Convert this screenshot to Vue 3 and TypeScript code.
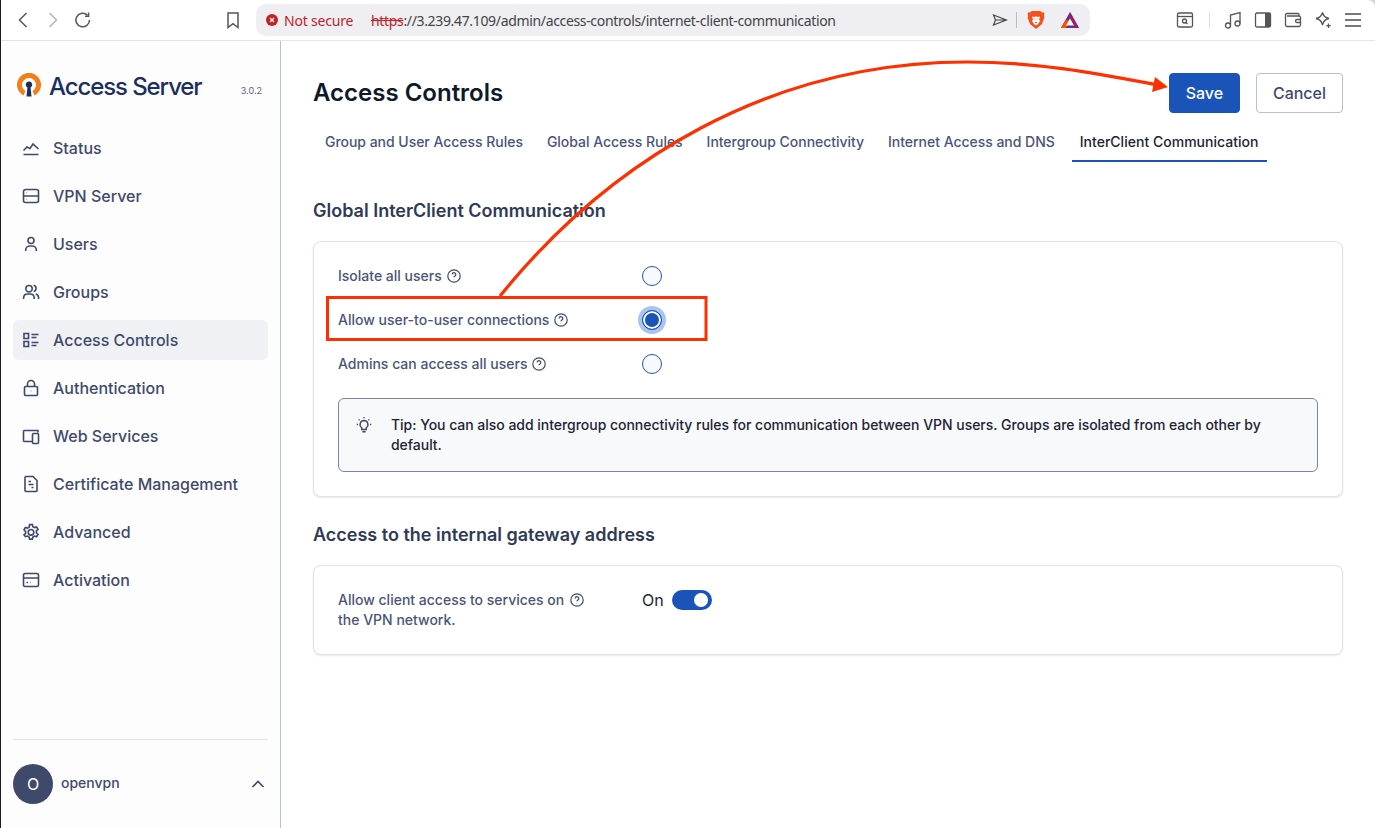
<script setup lang="ts">
interface NavItem { label: string; d: string; active?: boolean }
const nav: NavItem[] = [
  { label: 'Status', d: 'M2.500 16.500h15M2.500 12.500L6 9l3 1.500L12 6l5.500 5' },
  { label: 'VPN Server', d: 'M4.500 3.500h11a2 2 0 0 1 2 2v9a2 2 0 0 1-2 2h-11a2 2 0 0 1-2-2v-9a2 2 0 0 1 2-2zM2.500 10h15M5.200 6.800h.3M5.200 13.200h.3' },
  { label: 'Users', d: 'M10 3.500a3 3 0 1 1 0 6 3 3 0 0 1 0-6zM4.700 17v-1.200a4.300 3.800 0 0 1 4.300-3.800h2a4.300 3.800 0 0 1 4.300 3.800V17' },
  { label: 'Groups', d: 'M8 3.500a3.200 3.200 0 1 1 0 6.400 3.200 3.200 0 0 1 0-6.400zM2.600 17v-1.300a4 4 0 0 1 4-3.700h2.600a4 4 0 0 1 4 3.700V17M12.600 3.300a3.200 3.200 0 0 1 0 6.200M14.800 12.100a4 4 0 0 1 2.800 3.600V17' },
  { label: 'Access Controls', d: 'M3 3.500h4.500v5H3zM3 11.500h4.500v5H3zM10.500 4.500h7M10.500 7.500h5M10.500 12.500h7M10.500 15.500h5', active: true },
  { label: 'Authentication', d: 'M4.500 8.500h11a1 1 0 0 1 1 1v7a1 1 0 0 1-1 1h-11a1 1 0 0 1-1-1v-7a1 1 0 0 1 1-1zM6.500 8.500V6a3.500 3.500 0 0 1 7 0v2.500M9.800 13h.4' },
  { label: 'Web Services', d: 'M11 15.500H3.500a1 1 0 0 1-1-1v-9a1 1 0 0 1 1-1H17v2M12.500 7.500h4a1 1 0 0 1 1 1v8a1 1 0 0 1-1 1h-4a1 1 0 0 1-1-1v-8a1 1 0 0 1 1-1z' },
  { label: 'Certificate Management', d: 'M5 2.500h7l4 4v10a1 1 0 0 1-1 1H5a1 1 0 0 1-1-1v-13a1 1 0 0 1 1-1zM7.500 7.500h2.500M7.500 10.500h5M10.500 13.500h2' },
  { label: 'Advanced', d: 'M8.600 2.600h2.800l.5 2.100 1.600.9 2.100-.6 1.400 2.400-1.600 1.500v1.900l1.600 1.500-1.400 2.400-2.100-.6-1.600.9-.5 2.100H8.600l-.5-2.100-1.600-.9-2.100.6L3 12.800l1.600-1.500V9.400L3 7.900l1.400-2.400 2.100.6 1.600-.9zM10 7.500a2.800 2.800 0 1 1 0 5.600 2.800 2.800 0 0 1 0-5.600z' },
  { label: 'Activation', d: 'M4 3.500h12a1.500 1.500 0 0 1 1.500 1.500v10a1.500 1.500 0 0 1-1.500 1.500H4A1.500 1.500 0 0 1 2.500 15V5A1.500 1.500 0 0 1 4 3.500zM2.500 8h15M5.500 12.500h1.500M9 12.500h.5' },
]
const tabs: string[] = ['Group and User Access Rules', 'Global Access Rules', 'Intergroup Connectivity', 'Internet Access and DNS', 'InterClient Communication']
const radios = [
  { label: 'Isolate all users', checked: false },
  { label: 'Allow user-to-user connections', checked: true },
  { label: 'Admins can access all users', checked: false },
]
</script>

<template>
  <div class="page">
    <header class="chrome">
      <button class="cbtn"><svg width="20" height="20" viewBox="0 0 20 20"><path d="M13.500 3L6.500 10l7 7" class="cs" /></svg></button>
      <button class="cbtn"><svg width="20" height="20" viewBox="0 0 20 20"><path d="M6.500 3l7 7-7 7" class="cs faint" /></svg></button>
      <button class="cbtn"><svg width="20" height="20" viewBox="0 0 20 20"><path d="M16.500 10a6.800 6.800 0 1 1-2-4.800" class="cs" /><path d="M15.600 2.600v3.600H12" class="cs" /></svg></button>
      <button class="cbtn bookmark"><svg width="20" height="20" viewBox="0 0 20 20"><path d="M5 3h10v14.500l-5-3.800-5 3.800z" class="cs" /></svg></button>
      <div class="urlbar">
        <svg class="warn" width="12" height="12" viewBox="0 0 12 12"><circle cx="6" cy="6" r="6" fill="#c5221f" /><path d="M4 4l4 4M8 4l-4 4" stroke="#fff" stroke-width="1.200" /></svg>
        <span class="notsecure">Not secure</span>
        <span class="url"><span class="https">https</span>://3.239.47.109/admin/access-controls/internet-client-communication</span>
        <svg class="send" width="16" height="14" viewBox="0 0 16 14"><path d="M1.500 2l13 5-13 5 2-5zM3.500 7h11" fill="none" stroke="#444" stroke-width="1.200" /></svg>
        <span class="barsep"></span>
        <svg class="brave" width="18" height="20" viewBox="0 0 18 20"><path d="M4.500 1h9l1.200 1.400 1.800-.2 1 1.300-.6 2 .5 2L15 14l-6 5-6-5-2.400-6.500.5-2-.6-2 1-1.300 1.800.2z" fill="#f4511e" /><path d="M5 6.500l2.500.5L9 6.300l1.500.7 2.500-.5-1 3 1 1.500L11 14l-2 1.500L7 14l-2-3 1-1.500z" fill="#fff" /><path d="M7.500 9h.8M9.700 9h.8M8 12.500h2" stroke="#f4511e" stroke-width="1" /></svg>
        <svg class="bat" width="20" height="18" viewBox="0 0 20 18"><path d="M10 1L19 17H1z" fill="#662d91" /><path d="M10 1L19 17h-5L10 9.500z" fill="#9e1f63" /><path d="M1 17l4.500-8L10 9.500 6 17z" fill="#ff5000" /><path d="M10 7.500l4 7H6z" fill="#fff" /></svg>
      </div>
      <button class="cbtn shot"><svg width="20" height="20" viewBox="0 0 20 20"><rect x="2.500" y="3" width="15" height="14" rx="1.500" class="cs thin" /><path d="M2.500 6.500h15" class="cs thin" /><circle cx="9.500" cy="11" r="2" class="cs thin" /><path d="M11 12.500l1.500 1.500" class="cs thin" /></svg></button>
      <span class="toolsep"></span>
      <button class="cbtn"><svg width="20" height="20" viewBox="0 0 20 20"><circle cx="5" cy="15.500" r="2.500" class="cs thin" /><circle cx="14.500" cy="13.500" r="2.500" class="cs thin" /><path d="M7.500 15.500V5L17 2.500v11" class="cs thin" /></svg></button>
      <button class="cbtn"><svg width="20" height="20" viewBox="0 0 20 20"><rect x="2.500" y="3" width="15" height="14" rx="1.500" class="cs thin" /><path d="M12 3h4.500a1 1 0 0 1 1 1v12a1 1 0 0 1-1 1H12z" fill="#555" /></svg></button>
      <button class="cbtn"><svg width="20" height="20" viewBox="0 0 20 20"><path d="M16 6V4.500a1 1 0 0 0-1-1H4a1.500 1.500 0 0 0-1.500 1.500v10A1.500 1.500 0 0 0 4 16.500h12a1.500 1.500 0 0 0 1.500-1.500V7.500A1.500 1.500 0 0 0 16 6H4M17.500 9.500H14a1.500 1.500 0 0 0 0 3h3.500" class="cs thin" /></svg></button>
      <button class="cbtn"><svg width="20" height="20" viewBox="0 0 20 20"><path d="M9.500 2.500c.8 3.500 2.500 5.300 6.500 6-4 .8-5.700 2.500-6.500 6.500-.8-4-2.500-5.700-6.500-6.500 4-.7 5.700-2.500 6.500-6zM15.500 13.500v4.500M13.300 15.700h4.400" class="cs thin" /></svg></button>
      <button class="cbtn"><svg width="20" height="20" viewBox="0 0 20 20"><path d="M2 4h16M2 10h16M2 16h16" class="cs menu" /></svg></button>
    </header>

    <div class="shell">
      <aside class="sidebar">
        <div class="brand">
          <svg class="logo" width="24" height="24" viewBox="0 0 24 24">
            <path d="M6.500 22.500A12 12 0 1 1 17.500 22.500L15.600 18A7 7 0 1 0 8.400 18z" fill="#f07f1a" />
            <path d="M12 8.600a3.200 3.200 0 0 1 1.600 6L14.500 23.500H9.500l.9-8.900A3.200 3.200 0 0 1 12 8.600z" fill="#1b2f5e" />
          </svg>
          <span class="brandname">Access Server</span>
          <span class="version">3.0.2</span>
        </div>
        <nav class="nav">
          <a v-for="item in nav" :key="item.label" class="navitem" :class="{ active: item.active }">
            <svg width="20" height="20" viewBox="0 0 20 20"><path :d="item.d" class="ns" /></svg>
            <span>{{ item.label }}</span>
          </a>
        </nav>
        <div class="userfoot">
          <span class="avatar">O</span>
          <span class="username">openvpn</span>
          <svg class="chev" width="14" height="14" viewBox="0 0 14 14"><path d="M1.500 10L7 4.500 12.500 10" fill="none" stroke="#3f4a6b" stroke-width="1.600" /></svg>
        </div>
      </aside>

      <main class="main">
        <div class="titlebar">
          <h1>Access Controls</h1>
          <div class="actions">
            <button class="btn primary">Save</button>
            <button class="btn">Cancel</button>
          </div>
        </div>
        <div class="tabs">
          <span v-for="(t, i) in tabs" :key="t" class="tab" :class="{ current: i === 4 }">{{ t }}</span>
        </div>

        <h2 class="h-first">Global InterClient Communication</h2>
        <section class="card first">
          <div v-for="r in radios" :key="r.label" class="row">
            <div class="lab">
              <span>{{ r.label }}</span>
              <svg class="help" width="14" height="14" viewBox="0 0 14 14"><circle cx="7" cy="7" r="6.200" /><path d="M5.200 5.400a1.800 1.800 0 1 1 2.700 1.600c-.6.400-.9.700-.9 1.300M7 10.200v.4" /></svg>
            </div>
            <span class="radio" :class="{ checked: r.checked }"></span>
          </div>
          <div class="tip">
            <svg class="bulb" width="18" height="18" viewBox="0 0 18 18"><path d="M9 4.500a4 4 0 0 1 2.300 7.200v1.800H6.700v-1.800A4 4 0 0 1 9 4.500zM7.300 15.800h3.400M1.800 8.500h1.200M15 8.500h1.200M3.800 3.500l.8.800M14.200 3.500l-.8.800M9 1v1.200" /></svg>
            <p>Tip: You can also add intergroup connectivity rules for communication between VPN users. Groups are isolated from each other by default.</p>
          </div>
        </section>

        <h2 class="h-second">Access to the internal gateway address</h2>
        <section class="card second">
          <div class="wide">Allow client access to services on<svg class="help inl" width="14" height="14" viewBox="0 0 14 14"><circle cx="7" cy="7" r="6.200" /><path d="M5.200 5.400a1.800 1.800 0 1 1 2.700 1.600c-.6.400-.9.700-.9 1.300M7 10.200v.4" /></svg> the VPN network.</div>
          <span class="state">On</span>
          <span class="toggle"><span class="knob"></span></span>
        </section>
      </main>
    </div>

    <svg class="annot" width="1375" height="828" viewBox="0 0 1375 828">
      <rect x="327.500" y="297.500" width="378.500" height="42" fill="none" stroke="#ff3000" stroke-width="3" />
      <path d="M500 296C610 160 770 62 967 62C1040 62 1100 74 1158 85" fill="none" stroke="#ff3000" stroke-width="3.200" />
      <path d="M1168 87L1155 77L1152 92z" fill="#ff3000" />
    </svg>
  </div>
</template>

<style>
html, body { margin: 0; padding: 0; background: #fff; }
</style>

<style scoped>
.page { position: relative; width: 1375px; height: 828px; overflow: hidden; font-family: Inter, "Liberation Sans", sans-serif; color: #3f4a6b; background: #d8d8d8; box-sizing: border-box; border-left: 1px solid #1c1a1e; }
.chrome { height: 40px; border-bottom: 1px solid #e4e4e6; border-top-right-radius: 8px; display: flex; align-items: center; padding-left: 7px; box-sizing: content-box; background: #fff; }
.cbtn { width: 30px; height: 30px; padding: 0; border: 0; background: none; display: flex; align-items: center; justify-content: center; flex: none; }
.cs { fill: none; stroke: #555; stroke-width: 1.500; }
.cs.thin { stroke-width: 1.300; }
.cs.faint { stroke: #b5b5b5; }
.cs.menu { stroke: #777; stroke-width: 1.800; }
.bookmark { margin-left: 120px; }
.urlbar { margin-left: 8px; width: 834px; height: 32px; border-radius: 10px; background: #eeeef3; display: flex; align-items: center; padding-left: 10px; box-sizing: border-box; font-family: "Noto Sans", sans-serif; flex: none; }
.warn { flex: none; }
.notsecure { margin-left: 6px; width: 87px; color: #c5221f; font-size: 14px; letter-spacing: -0.2px; white-space: nowrap; }
.url { font-size: 14px; color: #444; width: 589px; white-space: nowrap; letter-spacing: -0.34px; }
.https { color: #c5221f; text-decoration: line-through; }
.send { margin-left: 32px; flex: none; }
.barsep { width: 1px; height: 16px; background: #bbb; margin-left: 8px; flex: none; }
.brave { margin-left: 10px; flex: none; }
.bat { margin-left: 15px; flex: none; }
.shot { margin-left: 80px; }
.toolsep { width: 1px; height: 16px; background: #ddd; margin: 0 8px 0 9px; flex: none; }

.shell { display: flex; height: 787px; background: #fff; }
.sidebar { width: 280px; flex: none; box-sizing: border-box; border-right: 1px solid #b8c0d8; background: #fdfdfd; padding: 0 12px; display: flex; flex-direction: column; }
.brand { height: 24px; margin-top: 32px; padding-left: 4px; display: flex; align-items: center; }
.logo { flex: none; }
.brandname { margin-left: 8px; margin-top: 3px; font-size: 24px; font-weight: 500; color: #1b2f5e; letter-spacing: -1.100px; white-space: nowrap; }
.version { margin-left: auto; margin-right: 6px; font-size: 9px; color: #5a6480; margin-top: 11px; }
.nav { margin-top: 31px; display: flex; flex-direction: column; gap: 8px; }
.navitem { height: 40px; display: flex; align-items: center; gap: 12px; padding-left: 8px; border-radius: 6px; font-size: 16px; font-weight: 500; color: #3f4a6b; }
.navitem.active { background: #f0f1f5; }
.ns { fill: none; stroke: #3f4a6b; stroke-width: 1.600; }
.userfoot { margin-top: auto; border-top: 1px solid #dfe1ec; height: 89px; box-sizing: border-box; padding-top: 24px; display: flex; align-items: flex-start; }
.avatar { width: 40px; height: 40px; border-radius: 50%; background: #3f4a6b; color: #fff; font-size: 16px; display: flex; align-items: center; justify-content: center; flex: none; }
.username { margin-left: 8px; margin-top: 10px; font-size: 14px; font-weight: 500; line-height: 18px; }
.chev { margin-left: auto; margin-right: 3px; margin-top: 13px; }

.main { flex: 1; min-width: 0; padding: 32px 32px 0; box-sizing: border-box; }
.titlebar { display: flex; align-items: center; justify-content: space-between; height: 40px; }
h1 { margin: -2px 0 0; font-size: 24px; font-weight: 600; color: #10182b; }
.actions { display: flex; gap: 16px; }
.btn { height: 40px; padding: 0 16px; border-radius: 4px; background: #fff; border: 1px solid #b8c0d8; color: #3f4a6b; font: 500 16px Inter, sans-serif; }
.btn.primary { width: 71px; padding: 0; background: #1a54b8; border-color: #1a54b8; color: #fff; }
.tabs { display: flex; gap: 8px; padding-left: 4px; margin-top: 8px; height: 40px; }
.tab { padding: 0 8px; height: 39px; line-height: 42px; font-size: 14px; font-weight: 500; letter-spacing: -0.03px; white-space: nowrap; color: #4a5578; }
.tab.current { margin-left: 1px; letter-spacing: 0.02px; color: #1d2433; border-bottom: 2px solid #1a54b8; }
h2 { margin: 0; font-size: 18px; line-height: 24px; font-weight: 600; color: #2f3a56; }
.h-first { margin-top: 38px; }
.h-second { margin-top: 26px; }
.card { margin-top: 18px; border: 1px solid #dfe1ec; border-radius: 8px; box-sizing: border-box; background: #fff; box-shadow: 0 1px 2px rgba(30, 40, 80, 0.1); padding: 0 24px; }
.card.first { height: 256px; padding-top: 12px; }
.card.second { height: 90px; display: flex; padding-top: 24px; align-items: flex-start; }
.row { height: 44px; display: flex; align-items: center; }
.lab { width: 304px; flex: none; font-size: 14px; font-weight: 500; color: #4a5578; line-height: 20px; display: flex; align-items: center; gap: 5px; }
.wide { width: 250px; margin-right: 54px; flex: none; font-size: 14px; font-weight: 500; color: #4a5578; line-height: 20px; }
.help { fill: none; stroke: #3f4a6b; stroke-width: 1.200; flex: none; }
.help.inl { margin-left: 6px; vertical-align: -2px; }
.radio { width: 20px; height: 20px; box-sizing: border-box; border: 1px solid #1a54b8; border-radius: 50%; background: #f8f9fb; flex: none; }
.radio.checked { background: #1a54b8; box-shadow: inset 0 0 0 2px #fff, 0 0 0 4px #a9c4ef; }
.tip { margin-top: 12px; height: 74px; box-sizing: border-box; border: 1px solid #7a86ad; border-radius: 6px; background: #f8f9fb; display: flex; padding: 16px 52px 0 16px; gap: 18px; }
.tip p { margin: 0; font-size: 14px; font-weight: 500; letter-spacing: -0.03px; line-height: 20px; color: #1d2433; }
.bulb { fill: none; stroke: #3f4a6b; stroke-width: 1.400; flex: none; margin-top: 1px; }
.state { font-size: 16px; line-height: 20px; color: #1d2433; width: 30px; }
.toggle { width: 40px; height: 20px; border-radius: 10px; background: #1a54b8; position: relative; flex: none; }
.knob { position: absolute; right: 4px; top: 3px; width: 14px; height: 14px; border-radius: 50%; background: #fff; }
.annot { position: absolute; left: -1px; top: 0; pointer-events: none; }
</style>
